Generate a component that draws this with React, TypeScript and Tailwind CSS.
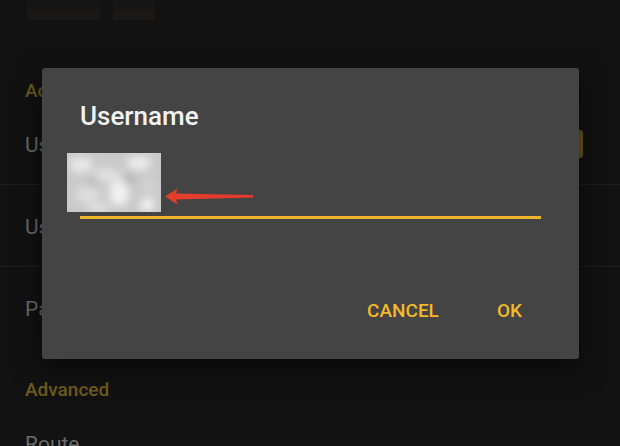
import { FC } from "react";

const font = { fontFamily: "Roboto, 'Noto Sans', sans-serif" };

const SectionHeader: FC<{ title: string; top?: boolean }> = ({ title, top }) => (
  <div
    className={`${top ? "mt-[59px]" : "mt-[29px]"} pl-[25px] text-[19px] leading-[24px] font-medium text-[#6f5c1b]`}
  >
    {title}
  </div>
);

const Row: FC<{ label: string; divider?: boolean; checked?: boolean }> = ({
  label,
  divider,
  checked,
}) => (
  <div
    className={`h-[82px] flex items-start justify-between pl-[25px] pr-[37px] ${divider ? "border-b border-[#1f1f1f]" : ""}`}
  >
    <span className="pt-[28px] text-[21px] leading-[28px] text-[#6b6b6b]">
      {label}
    </span>
    {checked && (
      <span className="mt-[27px] w-[28px] h-[28px] rounded-[3px] bg-[#6b5716]" />
    )}
  </div>
);

// pasted, blurred screenshot used as an annotation
const BlurredShot: FC = () => (
  <svg width="94" height="59" viewBox="0 0 94 59" className="block">
    <defs>
      <filter id="blur" x="-20%" y="-20%" width="140%" height="140%">
        <feGaussianBlur stdDeviation="4.5" />
      </filter>
    </defs>
    <rect width="94" height="59" fill="#c9c9c9" />
    <g filter="url(#blur)">
      <ellipse cx="14" cy="12" rx="12" ry="8" fill="#e8e8e8" />
      <ellipse cx="40" cy="22" rx="14" ry="7" fill="#e0e0e0" />
      <ellipse cx="72" cy="10" rx="12" ry="7" fill="#eeeeee" />
      <ellipse cx="52" cy="40" rx="10" ry="13" fill="#f2f2f2" />
      <ellipse cx="20" cy="42" rx="13" ry="9" fill="#dddddd" />
      <ellipse cx="82" cy="34" rx="8" ry="10" fill="#d2d2d2" />
      <ellipse cx="80" cy="52" rx="7" ry="6" fill="#fafafa" />
      <ellipse cx="32" cy="55" rx="11" ry="4" fill="#e6e6e6" />
      <ellipse cx="63" cy="26" rx="6" ry="4" fill="#acacac" />
      <ellipse cx="26" cy="28" rx="5" ry="4" fill="#b2b2b2" />
    </g>
  </svg>
);

const Arrow: FC = () => (
  <svg width="90" height="17" viewBox="0 0 90 17" className="block">
    <path
      d="M0 8.5 L12.5 0.5 L11 5.5 L88 7 L88 9.5 L11 11.5 L12.5 16.5 Z"
      fill="#e43d2b"
    />
  </svg>
);

const UsernameDialog: FC = () => (
  <div className="absolute left-[42px] top-[68px] w-[537px] h-[291px] rounded-[3px] bg-[#444444] shadow-[0_8px_28px_rgba(0,0,0,0.6)] pt-[32px] px-[38px] flex flex-col">
    <h2 className="text-[26px] leading-[32px] font-medium text-[#f2f2f2]">
      Username
    </h2>
    <div className="mt-[40px] h-[47px] border-b-[3px] border-[#f0b52b]" />
    <div className="mt-[72px] flex justify-end gap-[34px] pr-[7px]">
      <button className="px-3 py-2 text-[19px] leading-[24px] font-medium text-[#f3b92a]">
        CANCEL
      </button>
      <button className="px-3 py-2 text-[19px] leading-[24px] font-medium text-[#f3b92a]">
        OK
      </button>
    </div>
    <div className="absolute left-[25px] top-[85px]">
      <BlurredShot />
    </div>
    <div className="absolute left-[123px] top-[120px]">
      <Arrow />
    </div>
  </div>
);

export default function App() {
  return (
    <div
      className="relative w-[620px] h-[446px] overflow-hidden bg-[#121212]"
      style={font}
    >
      <div className="flex gap-[13px] pl-[27px]">
        <div className="flex flex-col w-[73px]">
          <span className="h-[10px] bg-[#151515]" />
          <span className="h-[10px] bg-[#191817]" />
        </div>
        <div className="flex flex-col w-[42px]">
          <span className="h-[10px] bg-[#161616]" />
          <span className="h-[10px] bg-[#1a1918]" />
        </div>
      </div>

      <SectionHeader title="Account" top />
      <Row label="Username" divider checked />
      <Row label="User agent" divider />
      <Row label="Password" />

      <SectionHeader title="Advanced" />
      <Row label="Route" />

      <UsernameDialog />
    </div>
  );
}
